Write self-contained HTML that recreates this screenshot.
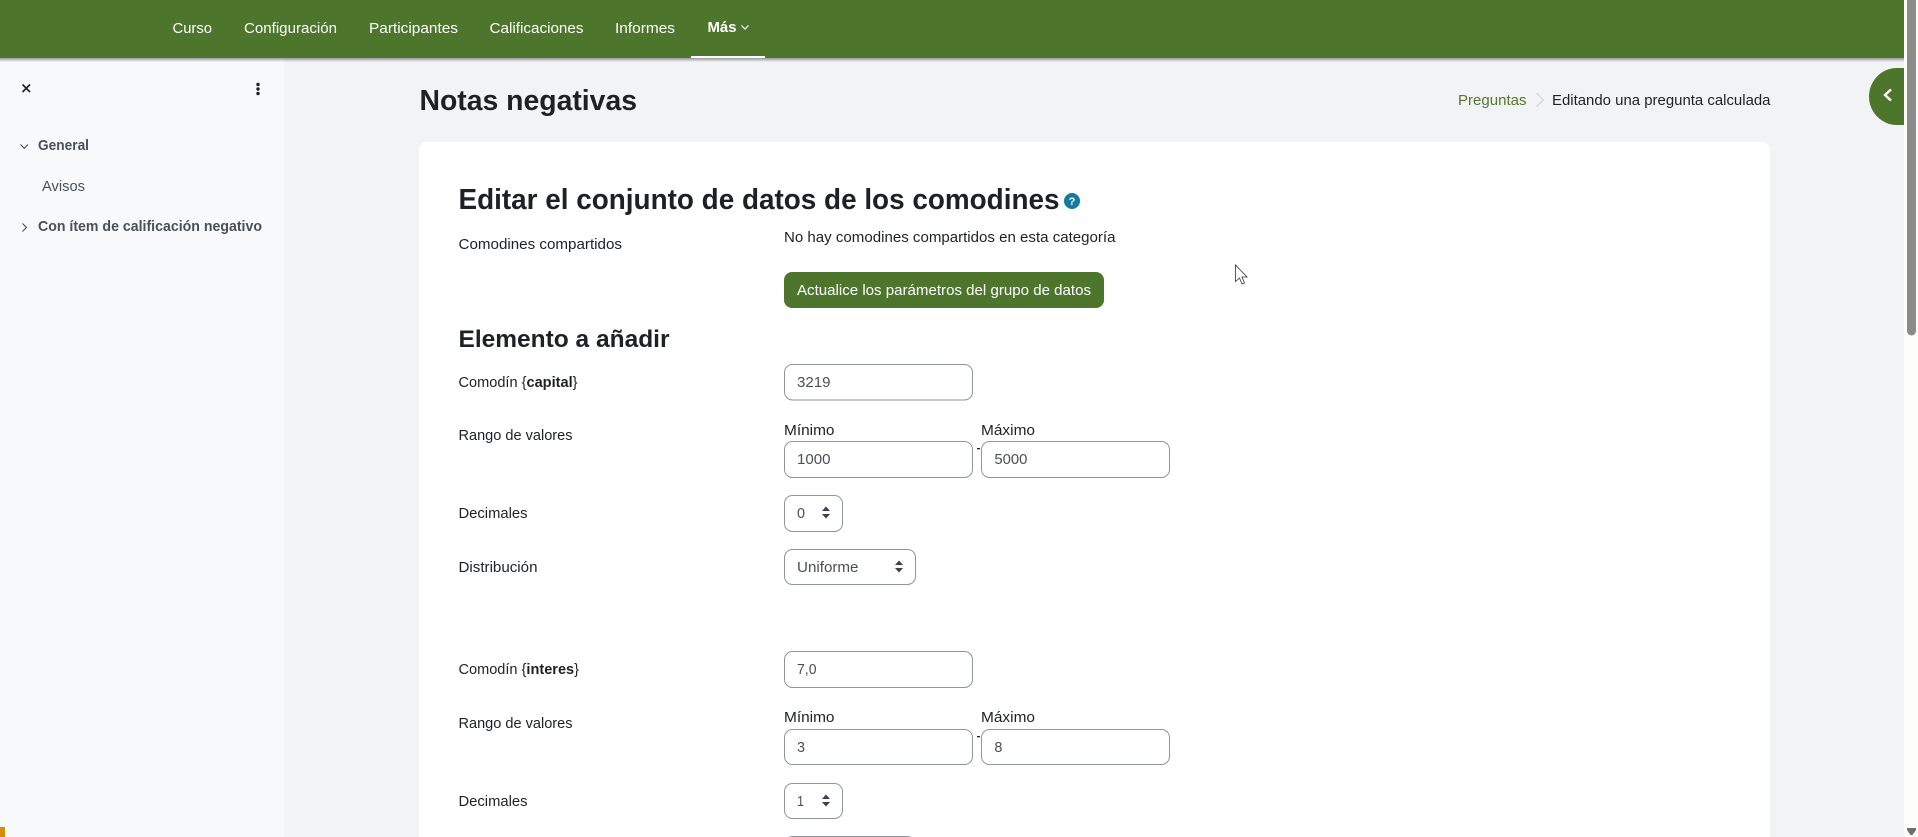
<!DOCTYPE html>
<html lang="es">
<head>
<meta charset="utf-8">
<title>Notas negativas</title>
<style>
html,body{margin:0;padding:0;width:1918px;height:837px;overflow:hidden;background:#f2f3f5}
svg{display:block;position:absolute;left:0;top:0}
text{font-family:"Liberation Sans",sans-serif;font-size:15px;fill:#1d2125}
.n{fill:#fff;font-size:15px}
.b{font-weight:700}
.s{fill:#495057}
.v{fill:#495057}
.f{fill:#fff;stroke:#8f959e;stroke-width:1}
</style>
</head>
<body>
<svg width="1918" height="837" viewBox="0 0 1918 837" xmlns="http://www.w3.org/2000/svg">
<defs>
<linearGradient id="sh" x1="0" y1="0" x2="0" y2="1"><stop offset="0" stop-color="#000" stop-opacity=".38"/><stop offset="1" stop-color="#000" stop-opacity="0"/></linearGradient>
</defs>
<rect width="1918" height="837" fill="#f2f3f5"/>
<rect x="0" y="58" width="284" height="779" fill="#f8f9fa"/>
<rect x="1904" y="0" width="14" height="837" fill="#fdfdfb"/>
<rect x="0" y="0" width="1904" height="58" fill="#4d762c"/>
<rect x="0" y="58" width="1904" height="4" fill="url(#sh)"/>

<!-- nav -->
<text class="n" x="172.5" y="33" textLength="39.5" lengthAdjust="spacingAndGlyphs">Curso</text>
<text class="n" x="244" y="33" textLength="93" lengthAdjust="spacingAndGlyphs">Configuración</text>
<text class="n" x="369" y="33" textLength="89" lengthAdjust="spacingAndGlyphs">Participantes</text>
<text class="n" x="489.500" y="33" textLength="94" lengthAdjust="spacingAndGlyphs">Calificaciones</text>
<text class="n" x="615" y="33" textLength="60" lengthAdjust="spacingAndGlyphs">Informes</text>
<text class="n b" x="707.5" y="32" textLength="29" lengthAdjust="spacingAndGlyphs">Más</text>
<path d="M741.5 25.5 L745 29 L748.5 25.5" fill="none" stroke="#fff" stroke-width="1.2"/>
<rect x="691" y="56" width="74" height="2" fill="#fff"/>

<!-- sidebar -->
<path d="M22.5 84.5 L30 92 M30 84.5 L22.5 92" stroke="#1d2125" stroke-width="1.6" fill="none"/>
<circle cx="258" cy="84.5" r="1.7" fill="#1d2125"/><circle cx="258" cy="89" r="1.7" fill="#1d2125"/><circle cx="258" cy="93.5" r="1.7" fill="#1d2125"/>
<path d="M20.5 144.500 L24.300 148.300 L28 144.500" fill="none" stroke="#495057" stroke-width="1.1"/>
<text class="s b" x="38" y="150" textLength="51" lengthAdjust="spacingAndGlyphs">General</text>
<text class="s" x="42" y="191" textLength="43" lengthAdjust="spacingAndGlyphs">Avisos</text>
<path d="M22.5 223.500 L26.5 227.500 L22.5 231.500" fill="none" stroke="#495057" stroke-width="1.1"/>
<text class="s b" x="38" y="231" textLength="224" lengthAdjust="spacingAndGlyphs">Con ítem de calificación negativo</text>

<!-- header -->
<text class="b" x="419.5" y="110" style="font-size:29px" textLength="217.5" lengthAdjust="spacingAndGlyphs">Notas negativas</text>
<text x="1458" y="105" style="fill:#56762f" textLength="68.5" lengthAdjust="spacingAndGlyphs">Preguntas</text>
<path d="M1536.500 93 L1543.500 100 L1536.500 106.500" fill="none" stroke="#ced4da" stroke-width="1.2"/>
<text x="1552" y="105" textLength="218.500" lengthAdjust="spacingAndGlyphs">Editando una pregunta calculada</text>

<!-- drawer toggle -->
<path d="M1904 68 H1897 A28 28.500 0 0 0 1897 125 H1904 Z" fill="#4d762c"/>
<path d="M1891 89.500 L1885 95 L1891 100.500" fill="none" stroke="#fff" stroke-width="2.4"/>

<!-- card -->
<path d="M419 837 V150 A8 8 0 0 1 427 142 H1762 A8 8 0 0 1 1770 150 V837 Z" fill="#fff"/>

<text class="b" x="458.500" y="209" style="font-size:29px" textLength="601" lengthAdjust="spacingAndGlyphs">Editar el conjunto de datos de los comodines</text>
<circle cx="1072" cy="201" r="8" fill="#137ba2"/>
<text class="b" x="1072" y="205" text-anchor="middle" style="font-size:11px;fill:#fff">?</text>
<text x="458.500" y="249" textLength="163.500" lengthAdjust="spacingAndGlyphs">Comodines compartidos</text>
<text x="784" y="242" textLength="331.500" lengthAdjust="spacingAndGlyphs">No hay comodines compartidos en esta categoría</text>
<rect x="784" y="272" width="320" height="36" rx="8" fill="#4d762c"/>
<text x="797" y="295" style="fill:#fff" textLength="294" lengthAdjust="spacingAndGlyphs">Actualice los parámetros del grupo de datos</text>
<text class="b" x="458.500" y="347" style="font-size:24px" textLength="211" lengthAdjust="spacingAndGlyphs">Elemento a añadir</text>

<text x="458.500" y="387" textLength="119" lengthAdjust="spacingAndGlyphs">Comodín {<tspan style="font-weight:700">capital</tspan>}</text>
<rect class="f" x="784.500" y="364.500" width="188" height="35.500" rx="8"/>
<text class="v" x="797" y="387" textLength="33.500" lengthAdjust="spacingAndGlyphs">3219</text>

<text x="458.500" y="440" textLength="114" lengthAdjust="spacingAndGlyphs">Rango de valores</text>
<text x="784" y="435" textLength="50.500" lengthAdjust="spacingAndGlyphs">Mínimo</text>
<text x="981" y="435" textLength="54" lengthAdjust="spacingAndGlyphs">Máximo</text>
<rect class="f" x="784.500" y="441.500" width="188" height="36" rx="8"/>
<rect class="f" x="981.500" y="441.500" width="188" height="36" rx="8"/>
<rect x="977" y="448" width="3" height="1.300" fill="#1d2125"/>
<text class="v" x="797" y="464" textLength="33.500" lengthAdjust="spacingAndGlyphs">1000</text>
<text class="v" x="994.400" y="464" textLength="33" lengthAdjust="spacingAndGlyphs">5000</text>

<text x="458.500" y="518" textLength="69" lengthAdjust="spacingAndGlyphs">Decimales</text>
<rect class="f" x="784.500" y="495.500" width="58" height="36" rx="8"/>
<text class="v" x="797" y="518" textLength="8" lengthAdjust="spacingAndGlyphs">0</text>
<path d="M822 511 L826 506.500 L830 511 Z M822 514 L826 518.500 L830 514 Z" fill="#3c4248"/>

<text x="458.500" y="572" textLength="79" lengthAdjust="spacingAndGlyphs">Distribución</text>
<rect class="f" x="784.500" y="549.500" width="131" height="35" rx="8"/>
<text class="v" x="797" y="572" textLength="61.500" lengthAdjust="spacingAndGlyphs">Uniforme</text>
<path d="M895 565 L899 560.500 L903 565 Z M895 568 L899 572.500 L903 568 Z" fill="#3c4248"/>

<text x="458.500" y="674" textLength="120.500" lengthAdjust="spacingAndGlyphs">Comodín {<tspan style="font-weight:700">interes</tspan>}</text>
<rect class="f" x="784.500" y="651.500" width="188" height="36" rx="8"/>
<text class="v" x="797" y="674" textLength="19.500" lengthAdjust="spacingAndGlyphs">7,0</text>

<text x="458.500" y="728" textLength="114" lengthAdjust="spacingAndGlyphs">Rango de valores</text>
<text x="784" y="722" textLength="50.500" lengthAdjust="spacingAndGlyphs">Mínimo</text>
<text x="981" y="722" textLength="54" lengthAdjust="spacingAndGlyphs">Máximo</text>
<rect class="f" x="784.500" y="729.500" width="188" height="35" rx="8"/>
<rect class="f" x="981.500" y="729.500" width="188" height="35" rx="8"/>
<rect x="977" y="736" width="3" height="1.300" fill="#1d2125"/>
<text class="v" x="797" y="752" textLength="8" lengthAdjust="spacingAndGlyphs">3</text>
<text class="v" x="994.400" y="752" textLength="8" lengthAdjust="spacingAndGlyphs">8</text>

<text x="458.500" y="806" textLength="69" lengthAdjust="spacingAndGlyphs">Decimales</text>
<rect class="f" x="784.500" y="783.500" width="58" height="35" rx="8"/>
<text class="v" x="797" y="806" textLength="7" lengthAdjust="spacingAndGlyphs">1</text>
<path d="M822 799 L826 794.500 L830 799 Z M822 802 L826 806.500 L830 802 Z" fill="#3c4248"/>
<rect class="f" x="784.500" y="836.500" width="131" height="35" rx="8"/>

<!-- cursor -->
<path d="M1235.500 265 V281.500 L1239.500 278 L1242 284 L1244.500 283 L1242 277 H1247 Z" fill="#fff" stroke="#333" stroke-width="0.8"/>

<!-- scrollbar -->
<path d="M1907 0 H1916 V331 A4.500 4.500 0 0 1 1907 331 Z" fill="#8b8b8b"/>
<path d="M1907 828 H1916 V830 L1912.500 835 H1910.500 L1907 830 Z" fill="#6f6f6f"/>

<!-- orange marker -->
<rect x="0" y="827" width="5" height="10" fill="#d48f0a"/>
</svg>
</body>
</html>
